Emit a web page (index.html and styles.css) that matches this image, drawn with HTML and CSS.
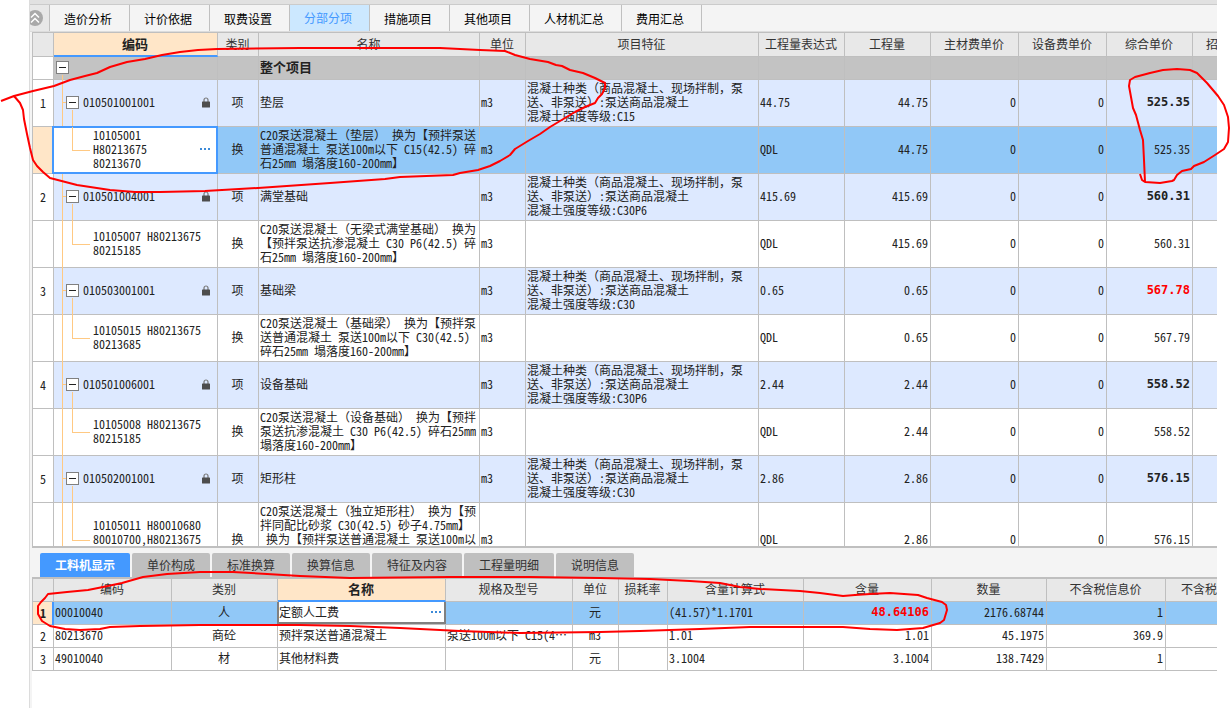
FILE: index.html
```html
<!DOCTYPE html>
<html lang="zh-CN">
<head>
<meta charset="utf-8">
<title>分部分项</title>
<link rel="stylesheet" href="styles.css">
</head>
<body>
<svg class="defs" width="0" height="0" aria-hidden="true">
  <symbol id="lock" viewBox="0 0 8 11">
    <path d="M2 5V3a2 2 0 0 1 4 0v2" fill="none" stroke="#777" stroke-width="1.2"/>
    <rect x="0" y="4.5" width="8" height="6" rx="0.6" fill="#4d4d4d"/>
  </symbol>
</svg>
<div class="app">
  <nav class="tabs">
    <button class="collapse" aria-label="收起">
      <svg width="20" height="26" viewBox="0 0 20 26"><circle cx="5" cy="13" r="8" fill="#a9a9a9"/><path d="M1 12.5l4-4 4 4M1 17.5l4-4 4 4" fill="none" stroke="#fff" stroke-width="1.5"/></svg>
    </button>
    <button class="tab">造价分析</button>
    <button class="tab">计价依据</button>
    <button class="tab">取费设置</button>
    <button class="tab active">分部分项</button>
    <button class="tab">措施项目</button>
    <button class="tab">其他项目</button>
    <button class="tab">人材机汇总</button>
    <button class="tab">费用汇总</button>
  </nav>

  <section class="upper">
    <table class="grid">
      <colgroup><col class="w22"><col class="w164"><col class="w41"><col class="w221"><col class="w46"><col class="w233"><col class="w86"><col class="w86"><col class="w88"><col class="w88"><col class="w86"><col></colgroup>
      <thead>
        <tr><th></th><th class="current">编码</th><th>类别</th><th>名称</th><th>单位</th><th>项目特征</th><th>工程量表达式</th><th>工程量</th><th>主材费单价</th><th>设备费单价</th><th>综合单价</th><th class="cut">招</th></tr>
      </thead>
      <tbody>
        <tr class="total"><td class="no"></td><td class="root"><button class="toggle" aria-label="折叠"></button></td><td></td><td class="title">整个项目</td><td></td><td></td><td></td><td></td><td></td><td></td><td></td><td></td></tr>

        <tr class="item"><td class="no">1</td><td class="code"><div class="node"><button class="toggle" aria-label="折叠"></button><span>010501001001</span><svg class="lock"><use href="#lock"/></svg></div></td><td class="mid">项</td><td>垫层</td><td>m3</td><td>混凝土种类（商品混凝土、现场拌制，泵<br>送、非泵送）:泵送商品混凝土<br>混凝土强度等级:C15</td><td>44.75</td><td class="num">44.75</td><td class="num">0</td><td class="num">0</td><td class="num strong">525.35</td><td></td></tr>
        <tr class="sub selected"><td class="no"></td><td class="code"><div class="node">
          <span>10105001<br>H80213675<br>80213670</span><button class="more" aria-label="更多"></button></div></td><td class="mid">换</td><td>C20泵送混凝土（垫层） 换为【预拌泵送<br>普通混凝土 泵送100m以下 C15(42.5) 碎<br>石25mm 塌落度160-200mm】</td><td>m3</td><td></td><td>QDL</td><td class="num">44.75</td><td class="num">0</td><td class="num">0</td><td class="num">525.35</td><td></td></tr>

        <tr class="item"><td class="no">2</td><td class="code"><div class="node"><button class="toggle" aria-label="折叠"></button><span>010501004001</span><svg class="lock"><use href="#lock"/></svg></div></td><td class="mid">项</td><td>满堂基础</td><td>m3</td><td>混凝土种类（商品混凝土、现场拌制，泵<br>送、非泵送）:泵送商品混凝土<br>混凝土强度等级:C30P6</td><td>415.69</td><td class="num">415.69</td><td class="num">0</td><td class="num">0</td><td class="num strong">560.31</td><td></td></tr>
        <tr class="sub"><td class="no"></td><td class="code"><div class="node"><span>10105007 H80213675<br>80215185</span></div></td><td class="mid">换</td><td>C20泵送混凝土（无梁式满堂基础） 换为<br>【预拌泵送抗渗混凝土 C30 P6(42.5) 碎<br>石25mm 塌落度160-200mm】</td><td>m3</td><td></td><td>QDL</td><td class="num">415.69</td><td class="num">0</td><td class="num">0</td><td class="num">560.31</td><td></td></tr>

        <tr class="item"><td class="no">3</td><td class="code"><div class="node"><button class="toggle" aria-label="折叠"></button><span>010503001001</span><svg class="lock"><use href="#lock"/></svg></div></td><td class="mid">项</td><td>基础梁</td><td>m3</td><td>混凝土种类（商品混凝土、现场拌制，泵<br>送、非泵送）:泵送商品混凝土<br>混凝土强度等级:C30</td><td>0.65</td><td class="num">0.65</td><td class="num">0</td><td class="num">0</td><td class="num strong red">567.78</td><td></td></tr>
        <tr class="sub"><td class="no"></td><td class="code"><div class="node"><span>10105015 H80213675<br>80213685</span></div></td><td class="mid">换</td><td>C20泵送混凝土（基础梁） 换为【预拌泵<br>送普通混凝土 泵送100m以下 C30(42.5)<br>碎石25mm 塌落度160-200mm】</td><td>m3</td><td></td><td>QDL</td><td class="num">0.65</td><td class="num">0</td><td class="num">0</td><td class="num">567.79</td><td></td></tr>

        <tr class="item"><td class="no">4</td><td class="code"><div class="node"><button class="toggle" aria-label="折叠"></button><span>010501006001</span><svg class="lock"><use href="#lock"/></svg></div></td><td class="mid">项</td><td>设备基础</td><td>m3</td><td>混凝土种类（商品混凝土、现场拌制，泵<br>送、非泵送）:泵送商品混凝土<br>混凝土强度等级:C30P6</td><td>2.44</td><td class="num">2.44</td><td class="num">0</td><td class="num">0</td><td class="num strong">558.52</td><td></td></tr>
        <tr class="sub"><td class="no"></td><td class="code"><div class="node"><span>10105008 H80213675<br>80215185</span></div></td><td class="mid">换</td><td>C20泵送混凝土（设备基础） 换为【预拌<br>泵送抗渗混凝土 C30 P6(42.5) 碎石25mm<br>塌落度160-200mm】</td><td>m3</td><td></td><td>QDL</td><td class="num">2.44</td><td class="num">0</td><td class="num">0</td><td class="num">558.52</td><td></td></tr>

        <tr class="item"><td class="no">5</td><td class="code"><div class="node"><button class="toggle" aria-label="折叠"></button><span>010502001001</span><svg class="lock"><use href="#lock"/></svg></div></td><td class="mid">项</td><td>矩形柱</td><td>m3</td><td>混凝土种类（商品混凝土、现场拌制，泵<br>送、非泵送）:泵送商品混凝土<br>混凝土强度等级:C30</td><td>2.86</td><td class="num">2.86</td><td class="num">0</td><td class="num">0</td><td class="num strong">576.15</td><td></td></tr>
        <tr class="sub partial"><td class="no"></td><td class="code"><div class="node"><span>10105011 H80010680<br>80010700,H80213675</span></div></td><td class="mid">换</td><td>C20泵送混凝土（独立矩形柱） 换为【预<br>拌同配比砂浆 C30(42.5) 砂子4.75mm】<br>&nbsp;换为【预拌泵送普通混凝土 泵送100m以</td><td>m3</td><td></td><td>QDL</td><td class="num">2.86</td><td class="num">0</td><td class="num">0</td><td class="num">576.15</td><td></td></tr>
      </tbody>
    </table>
  </section>

  <section class="lower">
    <nav class="subtabs">
      <button class="subtab active">工料机显示</button>
      <button class="subtab">单价构成</button>
      <button class="subtab">标准换算</button>
      <button class="subtab">换算信息</button>
      <button class="subtab">特征及内容</button>
      <button class="subtab">工程量明细</button>
      <button class="subtab">说明信息</button>
    </nav>
    <div class="detail">
      <table class="grid compact">
        <colgroup><col class="w22"><col class="w118"><col class="w106"><col class="w168"><col class="w127"><col class="w46"><col class="w49"><col class="w136"><col class="w128"><col class="w115"><col class="w119"><col></colgroup>
        <thead>
          <tr><th></th><th>编码</th><th>类别</th><th class="current">名称</th><th>规格及型号</th><th>单位</th><th>损耗率</th><th>含量计算式</th><th>含量</th><th>数量</th><th>不含税信息价</th><th class="cut">不含税</th></tr>
        </thead>
        <tbody>
          <tr class="selected"><td class="no">1</td><td class="lead">00010040</td><td class="mid">人</td><td class="edit"><div class="field"><input type="text" value="定额人工费" aria-label="名称"><button class="more" aria-label="更多"></button></div></td><td></td><td class="mid">元</td><td></td><td>(41.57)*1.1701</td><td class="num strong red">48.64106</td><td class="num">2176.68744</td><td class="num">1</td><td></td></tr>
          <tr><td class="no">2</td><td>80213670</td><td class="mid">商砼</td><td>预拌泵送普通混凝土</td><td>泵送100m以下 C15(4…</td><td class="mid">m3</td><td></td><td>1.01</td><td class="num">1.01</td><td class="num">45.1975</td><td class="num">369.9</td><td></td></tr>
          <tr><td class="no">3</td><td>49010040</td><td class="mid">材</td><td>其他材料费</td><td></td><td class="mid">元</td><td></td><td>3.1004</td><td class="num">3.1004</td><td class="num">138.7429</td><td class="num">1</td><td></td></tr>
        </tbody>
      </table>
    </div>
  </section>
</div>

<svg class="marks" width="1230" height="708" viewBox="0 0 1230 708" aria-hidden="true">
  <path d="M1 101L14 96L33 91L54 86L70 80L85 76L97 73L110 67L127 62L145 59L162 55L180 52L198 50L217 49L300 48L440 48L480 50L505 51L515 55L530 59L548 62L556 65L562 66L570 70L583 73L595 78L605 83L605 88L602 94L598 98L595 103L585 107L575 112L560 121L550 127L540 134L528 141L515 149L510 155L500 161L490 166L478 170L460 173L453 175L400 177L385 179L330 183L258 188L205 191L160 192L135 192L110 190L77 185L50 178L43 172L37 166L33 160L30 148L27 134L24 119L23 110L20 103L14 96"/>
  <path d="M1140 174L1142 180L1145 182L1160 183L1172 181L1174 180L1177 175L1182 171L1191 169L1194 166L1204 162L1215 155L1224 149L1228 142L1229 128L1228 117L1224 105L1218 96L1207 83L1197 73L1190 70L1177 69L1163 70L1150 73L1135 77L1130 80L1129 86L1133 108L1136 115L1140 130L1143 140L1144 160L1145 182"/>
  <path d="M48 594L67 592L88 590L103 587L122 583L143 577L167 574L200 572L233 572L267 574L300 576L350 578L450 577L530 577L600 578L650 579L690 581L720 583L740 587L760 589L800 591L820 593L843 596L855 595L870 594L890 593L918 595L927 598L942 602L946 605L947 610L944 620L940 623L923 628L897 630L870 629L843 627L750 627L700 629L640 631L600 632L520 633L460 631L400 628L350 626L300 625L200 625L140 626L110 627L100 629L80 630L65 629L50 626L42 621L38 614L38 606L41 602L45 598Z"/>
</svg>
</body>
</html>
```
FILE: styles.css
```css
* { box-sizing: border-box; }

body {
  margin: 0;
  background: #fff;
  color: #222;
  font: 12px/14px "Noto Sans Mono CJK SC", "Noto Sans CJK SC", sans-serif;
}

button, input {
  margin: 0;
  padding: 0;
  border: 0;
  color: inherit;
  font: inherit;
}

.defs { position: absolute; }

.app {
  display: flex;
  flex-direction: column;
  height: 100vh;
  margin: 0 13px 0 29px;
  border-left: 1px solid #dcdcdc;
  overflow: hidden;
}

/* Page tabs */
.tabs {
  display: flex;
  flex: none;
  height: 32px;
  border-top: 4px solid #e1e1e1;
  border-bottom: 1px solid #dcdcdc;
  background: #f4f4f4;
  box-shadow: inset 0 1px #cbcbcb;
  padding-top: 1px;
  font-family: "Noto Sans CJK SC", sans-serif;
}

.collapse {
  width: 20px;
  border-right: 1px solid #c0c0c0;
  background: #e8e8e8;
  overflow: hidden;
}

.collapse svg { display: block; }

.tab {
  padding: 2px 17px 0 14px;
  border-right: 1px solid #c0c0c0;
  background: #f4f4f4;
  color: #000;
}

.tab.active {
  padding-top: 0;
  background: #cce8ff;
  color: #4499ff;
}

/* Grids */
.upper {
  flex: 1 1 0;
  min-height: 0;
  padding-left: 2px;
  background: #f4f4f4;
  overflow: hidden;
}

.grid {
  width: 100%;
  table-layout: fixed;
  border-spacing: 0;
  border-left: 1px solid #bfbfbf;
  background: #fff;
}

.w22 { width: 21px; }
.w41 { width: 41px; }
.w46 { width: 46px; }
.w49 { width: 49px; }
.w86 { width: 86px; }
.w88 { width: 88px; }
.w106 { width: 106px; }
.w115 { width: 115px; }
.w118 { width: 118px; }
.w119 { width: 119px; }
.w127 { width: 127px; }
.w128 { width: 128px; }
.w136 { width: 136px; }
.w164 { width: 164px; }
.w168 { width: 168px; }
.w221 { width: 221px; }
.w233 { width: 233px; }

.grid th, .grid td {
  border-right: 1px solid #bfbfbf;
  border-bottom: 1px solid #bfbfbf;
  white-space: nowrap;
}

.grid th:last-child, .grid td:last-child { border-right: 0; }

.grid th {
  height: 25px;
  padding: 0 1px 2px 0;
  border-top: 1px solid #bfbfbf;
  background: #e8e8e8;
  color: #333;
  font-weight: 400;
  overflow: hidden;
}

.grid th.current {
  padding-bottom: 1px;
  border-bottom: 2px solid #4499ff;
  background: #ffe6c8;
  color: #222;
  font-size: 13px;
  font-weight: 700;
}

.grid th.cut {
  padding-left: 13px;
  text-align: left;
}

.grid td {
  height: 47px;
  padding: 0 2px 2px 1px;
}

.grid td.no {
  padding: 0 0 1px;
  background: #fff;
  text-align: center;
}

.grid td.mid { text-align: center; }
.grid td.num { text-align: right; }

.grid td.strong {
  font-family: "DejaVu Sans Mono", monospace;
  font-weight: 700;
}

.grid td.red { color: #f00; }

.item td { background: #dde9ff; }

.total td {
  height: 23px;
  padding-bottom: 2px;
  background: #c3c3c3;
}

.total td.title {
  font-size: 13px;
  font-weight: 700;
}

.selected td { background: #91c8f7; }
.grid .selected td.no { background: #ffe6c8; font-weight: 700; }

/* Tree column */
.toggle {
  position: relative;
  display: block;
  flex: none;
  width: 13px;
  height: 13px;
  border: 1px solid #808080;
  background: linear-gradient(#222, #222) center / 7px 1px no-repeat #fff;
}

.grid td.code, .grid td.root {
  position: relative;
  padding: 0 0 2px;
}

.grid td.root { padding-left: 2px; }

.node {
  position: relative;
  display: flex;
  align-items: center;
  gap: 4px;
  padding: 0 7px 0 12px;
}

.sub .node { padding-left: 39px; }

.root::before, .code::before {
  content: "";
  position: absolute;
  top: 0;
  bottom: -1px;
  left: 8px;
  width: 1px;
  background: #ffc983;
}

.root::before { top: 18px; }

.item .toggle::before {
  content: "";
  position: absolute;
  top: 5px;
  left: -4px;
  width: 3px;
  height: 1px;
  background: #ffc983;
}

.item .code::after {
  content: "";
  position: absolute;
  top: 30px;
  bottom: -1px;
  left: 18px;
  width: 1px;
  background: #ffc983;
}

.sub .code::after {
  content: "";
  position: absolute;
  top: 0;
  left: 18px;
  width: 17px;
  height: 50%;
  border: solid #ffc983;
  border-width: 0 0 1px 1px;
}

.sub.selected .code { background: #fff; }

.sub.selected .code::before {
  inset: -1px -1px -1px -2px;
  width: auto;
  border: 2px solid #4499ff;
  background: none;
}

/* Row cut by the end of the pane: its lines sit on the pane's lower edge */
.grid .partial td {
  height: 43px;
  padding-bottom: 0;
  border-bottom: 0;
  vertical-align: bottom;
}

.partial .code::after { height: 37px; }

.lock {
  width: 8px;
  height: 11px;
  margin-left: auto;
}

.more {
  width: 10px;
  height: 14px;
  margin-left: auto;
  background: repeating-linear-gradient(90deg, #3c8ad8 0 2px, transparent 2px 4px) center / 10px 2px no-repeat;
}

/* Detail pane */
.lower {
  flex: 0 0 162px;
  display: flex;
  flex-direction: column;
  padding-left: 2px;
  background: #f4f4f4;
}

.subtabs {
  display: flex;
  gap: 2px;
  height: 31px;
  padding: 5px 0 0 8px;
  border-top: 2px solid #bfbfbf;
  font-family: "Noto Sans CJK SC", sans-serif;
}

.subtab {
  padding: 0 15px;
  border-radius: 2px 2px 0 0;
  background: #bfbfbf;
  color: #333;
}

.subtab.active {
  background: #4499ff;
  color: #fff;
  font-weight: 700;
}

.detail {
  flex: 1;
  border-top: 1px solid #bfbfbf;
  background: #fff;
}

.compact th { height: 24px; }
.compact th.cut { padding-left: 15px; }
.compact td { height: 23px; }
.compact td.lead { box-shadow: -2px 0 #4499ff; }

.grid td.edit {
  position: relative;
  padding: 0;
  background: #fff;
}

.edit::after {
  content: "";
  position: absolute;
  inset: 0 -1px 0 -1px;
  border: solid #808080;
  border-width: 0 2px 2px;
  pointer-events: none;
}

.field {
  display: flex;
  align-items: center;
  padding: 0 4px 2px 1px;
}

.field input {
  flex: 1;
  min-width: 0;
  background: none;
  outline: 0;
}

/* Freehand ink over the window */
.marks {
  position: absolute;
  top: 0;
  left: 0;
  fill: none;
  stroke: #f00;
  stroke-width: 2;
  stroke-linejoin: round;
  pointer-events: none;
}
```
